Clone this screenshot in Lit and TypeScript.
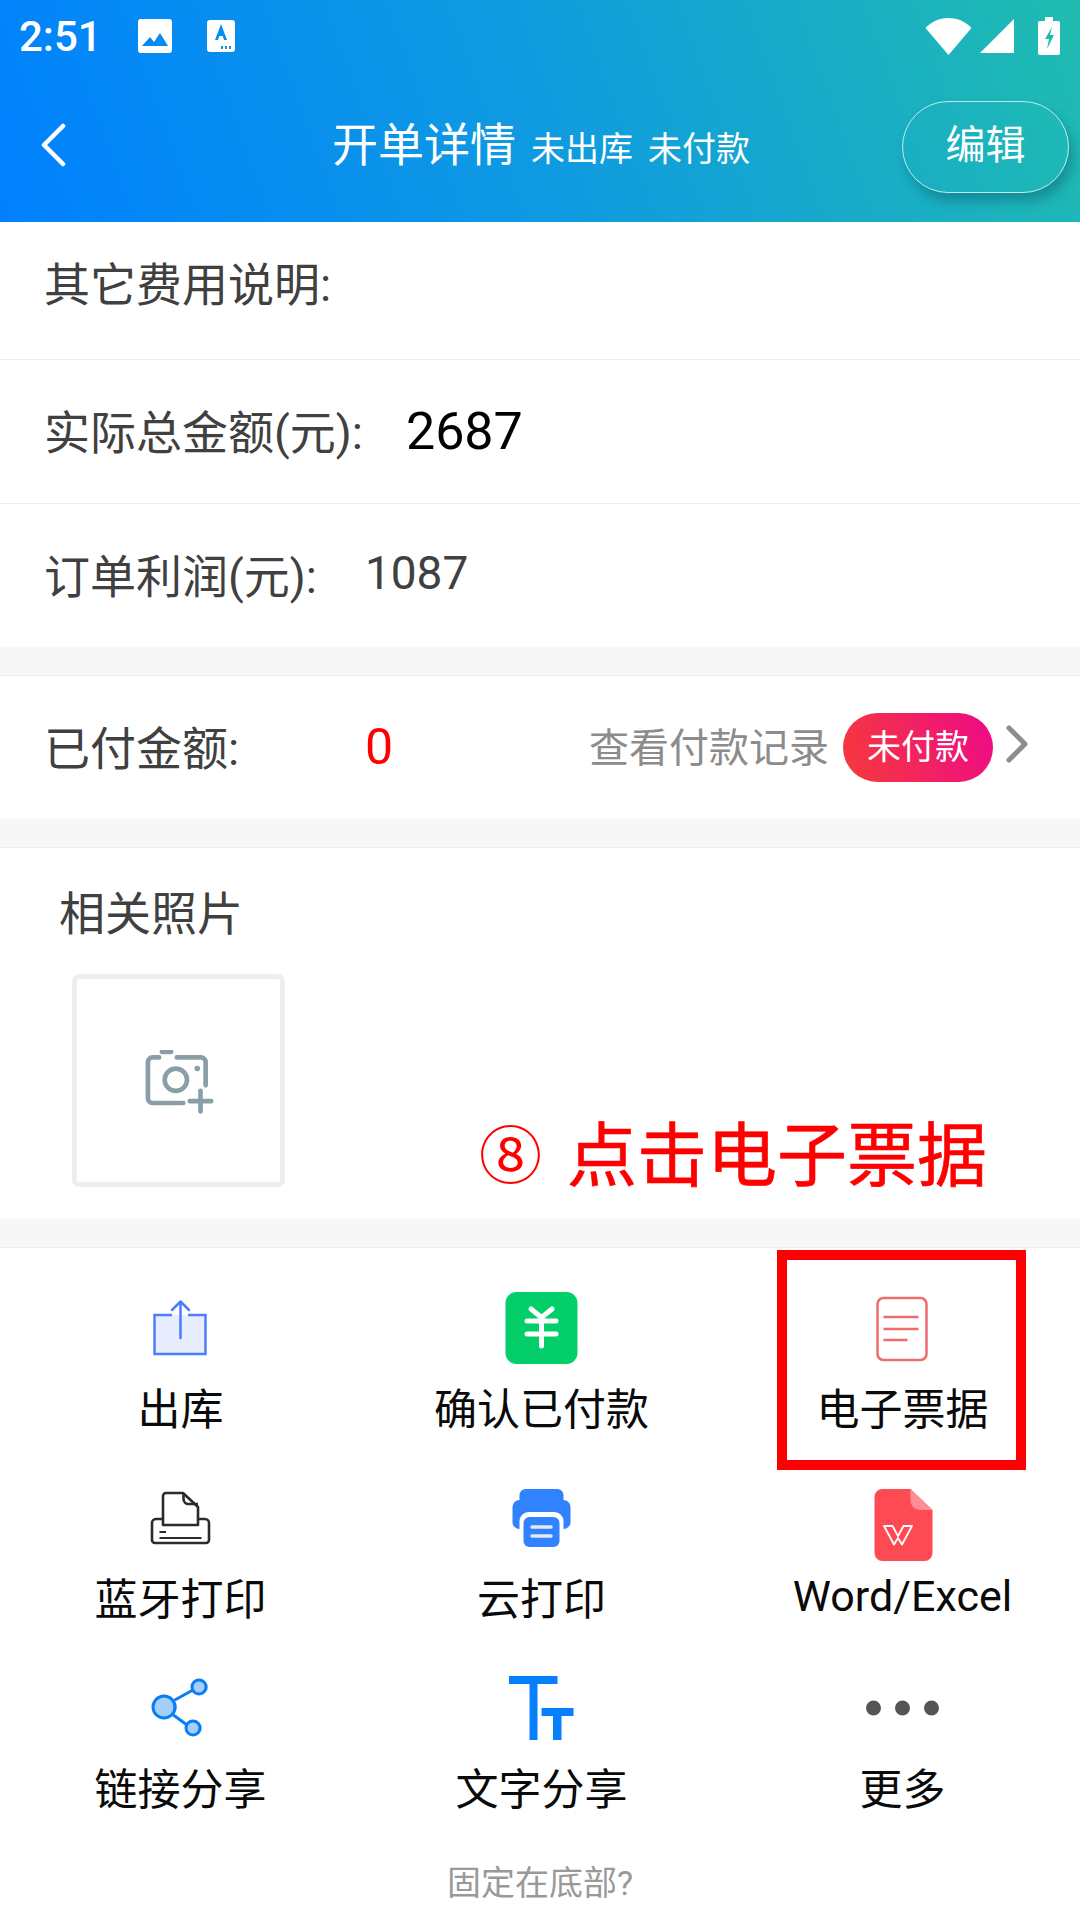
import { LitElement, html, css, svg } from "lit";
import { customElement } from "lit/decorators.js";

const icons = {
  upload: svg`<svg width="76" height="76" viewBox="0 0 76 76" fill="none">
    <rect x="11" y="25" width="52" height="39" fill="#e8edfd"/>
    <path d="M29 25H11.500V64H62.500V25H45" stroke="#4d7cfe" stroke-width="2.500"/>
    <path d="M37.500 48V12M29 20l8.500-8.500L46 20" stroke="#4d7cfe" stroke-width="2.500" stroke-linecap="round" stroke-linejoin="round"/>
  </svg>`,
  yen: svg`<svg width="76" height="76" viewBox="0 0 76 76" fill="none">
    <rect x="1.500" y="2" width="72" height="72" rx="11" fill="#03cf6a"/>
    <path d="M27 19l10.500 8.500L48 19M37.500 27.500V56M23 31H52M23 44H52" stroke="#fff" stroke-width="5" stroke-linecap="round"/>
  </svg>`,
  doc: svg`<svg width="76" height="76" viewBox="0 0 76 76" fill="none">
    <rect x="12.500" y="8" width="49" height="62" rx="6" stroke="#ee6b6e" stroke-width="2.500"/>
    <path d="M18.500 27H53.500M18.500 39H53.500M18.500 50H42.500" stroke="#ee6b6e" stroke-width="2.500"/>
  </svg>`,
  printer: svg`<svg width="76" height="76" viewBox="0 0 76 76" fill="none" stroke="#2b2b2b">
    <path d="M20 45V16a3 3 0 0 1 3-3H40L55 27V45Z" stroke-width="2.600" stroke-linejoin="round"/>
    <path d="M40.500 13V19a5 5 0 0 0 5 5H55" stroke-width="2.600"/>
    <path d="M20 39H13a4 4 0 0 0-4 4V60a3 3 0 0 0 3 3H63a3 3 0 0 0 3-3V43a4 4 0 0 0-4-4H55" stroke-width="2.600"/>
    <path d="M16.500 52H23M16.500 58H58.500" stroke-width="2.200"/>
  </svg>`,
  cloud: svg`<svg width="76" height="76" viewBox="0 0 76 76" fill="none">
    <path d="M15.500 20V15a6 6 0 0 1 6-6H53.500a6 6 0 0 1 6 6V20a7 7 0 0 1 7 7V43a7 7 0 0 1-7 6V41a9 9 0 0 0-9-9H24.500a9 9 0 0 0-9 9V49a7 7 0 0 1-7-6V27a7 7 0 0 1 7-7Z" fill="#3182ff"/>
    <rect x="19.500" y="37" width="36" height="30" rx="6" fill="#3182ff"/>
    <path d="M28 47H47M28 56H47" stroke="#e4e8ef" stroke-width="3.500" stroke-linecap="round"/>
  </svg>`,
  wps: svg`<svg class="tall" width="76" height="76" viewBox="0 0 76 76" fill="none">
    <path d="M17.500 9H45.500L67.500 30V73a8 8 0 0 1-8 8H17.500a8 8 0 0 1-8-8V17a8 8 0 0 1 8-8Z" fill="#fe4a52"/>
    <path d="M45.500 9L67.500 30H55a9.500 9.500 0 0 1-9.500-9.500Z" fill="#ff8e93"/>
    <path d="M19 46H27.500L33 56 38.500 46H47L37 64.500 33 58 29 64.500Z" stroke="#fff" stroke-width="1.800" stroke-linejoin="round"/>
  </svg>`,
  share: svg`<svg width="76" height="76" viewBox="0 0 76 76" fill="none">
    <path d="M30 31L50 20M29 44L44 55" stroke="#0a7cf5" stroke-width="3"/>
    <circle cx="23" cy="37" r="11" fill="#a2d0fb"/>
    <circle cx="21" cy="37" r="11" fill="#a2d0fb" stroke="#0a7cf5" stroke-width="3"/>
    <circle cx="58" cy="17" r="7" fill="#a2d0fb"/>
    <circle cx="56" cy="17" r="7" fill="#a2d0fb" stroke="#0a7cf5" stroke-width="3"/>
    <circle cx="52" cy="58" r="7" fill="#a2d0fb"/>
    <circle cx="50" cy="58" r="7" fill="#a2d0fb" stroke="#0a7cf5" stroke-width="3"/>
  </svg>`,
  text: svg`<svg width="76" height="76" viewBox="0 0 76 76" fill="#067ffa">
    <rect x="5" y="6" width="48.500" height="8"/><rect x="25.500" y="6" width="8" height="64"/>
    <rect x="37.500" y="38" width="32" height="8"/><rect x="49" y="38" width="8.500" height="32"/>
  </svg>`,
  more: svg`<svg width="76" height="76" viewBox="0 0 76 76" fill="#555">
    <circle cx="8.500" cy="38" r="7.500"/><circle cx="37.500" cy="38" r="7.500"/><circle cx="66.500" cy="38" r="7.500"/>
  </svg>`,
};

const actions = [
  { icon: icons.upload, label: "出库" },
  { icon: icons.yen, label: "确认已付款" },
  { icon: icons.doc, label: "电子票据" },
  { icon: icons.printer, label: "蓝牙打印" },
  { icon: icons.cloud, label: "云打印" },
  { icon: icons.wps, label: "Word/Excel", latin: true },
  { icon: icons.share, label: "链接分享" },
  { icon: icons.text, label: "文字分享" },
  { icon: icons.more, label: "更多" },
];

@customElement("app-root")
export class AppRoot extends LitElement {
  static styles = css`
    :host {
      display: block;
      position: relative;
      width: 1080px;
      height: 1920px;
      overflow: hidden;
      background: #fff;
      font-family: Roboto, "Noto Sans CJK SC", sans-serif;
      color: #404040;
    }

    .header {
      height: 222px;
      background: linear-gradient(70deg, #0080ff 0%, #0f9be0 50%, #20bcb0 100%);
      color: #fff;
    }

    .status {
      display: flex;
      align-items: center;
      height: 72px;
      padding: 0 20px 0 19px;
    }
    .time {
      font-size: 42px;
      font-weight: 500;
      width: 119px;
    }
    .status svg {
      display: block;
    }
    .status .photo {
      margin-right: 35px;
    }
    .status .spacer {
      flex: 1;
    }
    .status .wifi {
      margin-right: 8px;
    }
    .status .signal {
      margin-right: 24px;
    }

    .toolbar {
      display: flex;
      align-items: center;
      height: 120px;
      margin-top: 15px;
      padding: 0 11px 0 40px;
    }
    .back {
      display: block;
      margin-bottom: 4px;
    }
    .title {
      display: flex;
      align-items: baseline;
      margin-left: 265px;
      padding-bottom: 12px;
      flex: 1;
      font-size: 46px;
    }
    .title small {
      font-size: 34px;
      margin-left: 15px;
    }
    .edit {
      width: 165px;
      height: 90px;
      border: 1px solid rgba(255, 255, 255, 0.7);
      border-radius: 46px;
      box-shadow: 4px 8px 12px rgba(0, 70, 90, 0.35);
      font-size: 40px;
      line-height: 88px;
      text-align: center;
    }

    .row {
      display: flex;
      align-items: center;
      box-sizing: border-box;
      height: 144px;
      padding: 0 45px 6px 44px;
      border-bottom: 1px solid #eee;
      font-size: 46px;
    }
    .row.first {
      height: 138px;
      padding-bottom: 20px;
    }
    .row.last {
      height: 143px;
      border-bottom: none;
    }
    .label {
      white-space: nowrap;
    }
    .total {
      margin: 6px 0 0 43px;
      font-size: 52px;
      color: #000;
    }
    .profit {
      margin-left: 48px;
    }
    .paid-label {
      width: 196px;
    }
    .paid {
      box-sizing: border-box;
      width: 349px;
      margin-top: 4px;
      padding-left: 125px;
      font-size: 50px;
      color: #f00;
    }
    .records {
      font-size: 40px;
      color: #8c8c8c;
    }
    .pill {
      margin: 6px 0 0 14px;
      width: 150px;
      height: 69px;
      border-radius: 35px;
      background: linear-gradient(70deg, #f63a3a, #ee0a88);
      color: #fff;
      font-size: 34px;
      line-height: 68px;
      text-align: center;
    }
    .chevron {
      display: block;
      margin-left: 12px;
    }

    .gap {
      height: 29px;
      background: #f7f7f7;
      border-bottom: 1px solid #eee;
      box-sizing: border-box;
    }

    .photos {
      height: 371px;
      padding: 0 0 0 59px;
      box-sizing: border-box;
    }
    .photos h3 {
      margin: 0;
      padding-top: 36px;
      font-size: 46px;
      font-weight: 400;
      line-height: 60px;
    }
    .picker {
      display: flex;
      align-items: center;
      justify-content: center;
      box-sizing: border-box;
      width: 213px;
      height: 213px;
      margin: 30px 0 0 13px;
      border: 5px solid #eee;
      border-radius: 7px;
    }
    .picker svg {
      display: block;
      margin: 6px 0 0 4px;
    }

    .actions {
      display: grid;
      grid-template-columns: repeat(3, 361px);
      row-gap: 44px;
      padding-top: 42px;
    }
    .action {
      display: flex;
      flex-direction: column;
      align-items: center;
      height: 146px;
    }
    .action svg {
      display: block;
      overflow: visible;
    }
    .action span {
      margin-top: 19px;
      font-size: 43px;
      line-height: 50px;
      color: #0a0a0a;
    }
    .action span.latin {
      margin-top: 15px;
    }

    .pin {
      margin-top: 43px;
      font-size: 34px;
      line-height: 48px;
      color: #999;
      text-align: center;
    }

    .note {
      position: absolute;
      left: 479px;
      top: 1112px;
      display: flex;
      align-items: center;
      gap: 25px;
      font-size: 70px;
      font-weight: 400;
      line-height: 90px;
      color: #f00;
      -webkit-text-stroke: 0.6px #f00;
      white-space: nowrap;
    }
    .note span {
      font-size: 63px;
      -webkit-text-stroke: 0;
    }
    .mark {
      position: absolute;
      left: 777px;
      top: 1250px;
      box-sizing: border-box;
      width: 249px;
      height: 220px;
      border: 10px solid #f00;
    }
  `;

  render() {
    return html`
      <div class="header">
        <div class="status">
          <span class="time">2:51</span>
          <svg class="photo" width="34" height="34" viewBox="0 0 34 34">
            <path d="M3 0H31a3 3 0 0 1 3 3V31a3 3 0 0 1-3 3H3a3 3 0 0 1-3-3V3a3 3 0 0 1 3-3ZM4 27H30L22 14 16 23 12 18Z" fill="#fff" fill-rule="evenodd"/>
          </svg>
          <svg width="28" height="32" viewBox="0 0 28 32">
            <path d="M3 0H25a3 3 0 0 1 3 3V29a3 3 0 0 1-3 3H3a3 3 0 0 1-3-3V3a3 3 0 0 1 3-3ZM14 4L8 20H11L12.300 16H15.700L17 20H20Z" fill="#fff" fill-rule="evenodd"/>
            <path d="M14 26h2v3h-2zM18 26h2v3h-2zM22 26h2v3h-2z" fill="#1096dc"/>
          </svg>
          <span class="spacer"></span>
          <svg class="wifi" width="47" height="37" viewBox="0 0 47 37">
            <path d="M23.500 37L0.500 10C6 4 14 0 23.500 0S41 4 46.500 10Z" fill="#fff"/>
          </svg>
          <svg class="signal" width="34" height="34" viewBox="0 0 34 34">
            <path d="M34 0V34H0Z" fill="#fff"/>
          </svg>
          <svg width="22" height="38" viewBox="0 0 22 38">
            <path d="M7 0H15V4H20a2 2 0 0 1 2 2V36a2 2 0 0 1-2 2H2a2 2 0 0 1-2-2V6a2 2 0 0 1 2-2H7ZM14 10L7 22H11L9 32 16 18H12Z" fill="#fff" fill-rule="evenodd"/>
          </svg>
        </div>
        <div class="toolbar">
          <svg class="back" width="27" height="44" viewBox="0 0 27 44" fill="none">
            <path d="M23 3L4 22 23 41" stroke="#fff" stroke-width="4.500" stroke-linecap="round" stroke-linejoin="round"/>
          </svg>
          <div class="title">开单详情<small>未出库</small><small>未付款</small></div>
          <div class="edit">编辑</div>
        </div>
      </div>

      <div class="row first"><span class="label">其它费用说明:</span></div>
      <div class="row">
        <span class="label">实际总金额(元):</span>
        <span class="total">2687</span>
      </div>
      <div class="row last">
        <span class="label">订单利润(元):</span>
        <span class="profit">1087</span>
      </div>
      <div class="gap"></div>
      <div class="row last">
        <span class="label paid-label">已付金额:</span>
        <span class="paid">0</span>
        <span class="records">查看付款记录</span>
        <span class="pill">未付款</span>
        <svg class="chevron" width="24" height="40" viewBox="0 0 24 40" fill="none">
          <path d="M4 3L20 19 4 35" stroke="#8c8c8c" stroke-width="5" stroke-linecap="round" stroke-linejoin="round"/>
        </svg>
      </div>
      <div class="gap"></div>

      <div class="photos">
        <h3>相关照片</h3>
        <div class="picker">
          <svg width="71" height="67" viewBox="0 0 76 72" fill="none" stroke="#8a9ea8" stroke-width="5" stroke-linecap="round">
            <path d="M18 2H28"/>
            <path d="M15 8H8a5 5 0 0 0-5 5V52a5 5 0 0 0 5 5H41"/>
            <path d="M34 8H60a5 5 0 0 1 5 5V38"/>
            <circle cx="33" cy="32" r="12"/>
            <circle cx="56" cy="20" r="2" fill="#8a9ea8" stroke-width="2"/>
            <path d="M48 55H71M59.500 44V66"/>
          </svg>
        </div>
      </div>
      <div class="gap"></div>

      <div class="actions">
        ${actions.map(
          (a) => html`<div class="action">
            ${a.icon}<span class=${a.latin ? "latin" : ""}>${a.label}</span>
          </div>`
        )}
      </div>
      <div class="pin">固定在底部?</div>

      <div class="note"><span>⑧</span>点击电子票据</div>
      <div class="mark"></div>
    `;
  }
}

declare global {
  interface HTMLElementTagNameMap {
    "app-root": AppRoot;
  }
}
